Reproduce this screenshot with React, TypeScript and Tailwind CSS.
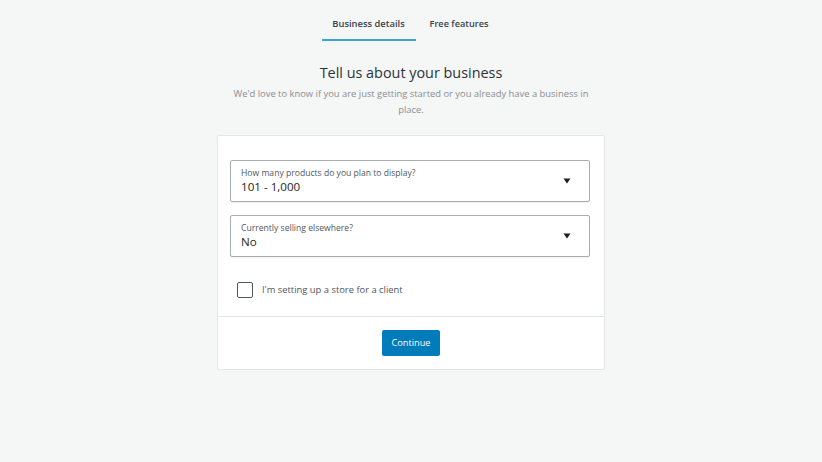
import React from "react";

function Caret() {
  return (
    <svg width="8" height="6" viewBox="0 0 8 6" className="shrink-0">
      <path d="M0.5 0.5 L7.5 0.5 L4 5.5 Z" fill="#1e1e1e" />
    </svg>
  );
}

function SelectBox({ label, value }: { label: string; value: string }) {
  return (
    <div className="flex h-[42px] w-[360px] items-center justify-between rounded-[2px] border border-[#a8adb1] bg-white pl-[10px] pr-[18px] shadow-[0_1px_1px_rgba(0,0,0,0.06)]">
      <div className="flex flex-col">
        <span className="text-[8.6px] leading-[11px] text-[#50575e]">{label}</span>
        <span className="text-[11.6px] leading-[15px] text-[#1e1e1e]">{value}</span>
      </div>
      <Caret />
    </div>
  );
}

export default function App() {
  return (
    <div
      className="flex min-h-[462px] w-full flex-col items-center bg-[#f5f6f6]"
      style={{ fontFamily: '"Open Sans", "Noto Sans", sans-serif' }}
    >
      <div className="mt-[15px] flex items-start gap-[14px] pr-[12px]">
        <div className="flex w-[94px] flex-col items-center">
          <span className="mt-px text-[9.4px] font-semibold leading-[16px] text-[#3c434a]">Business details</span>
          <div className="mt-[7px] h-[2px] w-full bg-[#3ea3d8]" />
        </div>
        <span className="mt-px text-[9.2px] font-semibold leading-[16px] text-[#3c434a]">Free features</span>
      </div>

      <h1 className="mt-[22px] text-[14.4px] leading-[20px] text-[#2c3338]">Tell us about your business</h1>
      <p className="mt-[3px] w-[366px] text-center text-[9.4px] leading-[16px] text-[#8a8f94]">
        We'd love to know if you are just getting started or you already have a business in place.
      </p>

      <div className="mt-[17px] flex w-[388px] flex-col rounded-[2px] border border-[#e4e6e8] bg-white">
        <div className="flex flex-col gap-[13px] px-[12px] pt-[24px]">
          <SelectBox label="How many products do you plan to display?" value="101 - 1,000" />
          <SelectBox label="Currently selling elsewhere?" value="No" />
        </div>
        <div className="flex items-center gap-[9px] pb-[18px] pl-[19px] pt-[25px]">
          <div className="h-[16px] w-[16px] rounded-[2px] border-[1.5px] border-[#50575e] bg-white" />
          <span className="text-[9.4px] text-[#50575e]">I'm setting up a store for a client</span>
        </div>
        <div className="h-px w-full bg-[#e4e6e8]" />
        <div className="flex justify-center pb-[13px] pt-[13px]">
          <button className="h-[26px] w-[58px] rounded-[2px] bg-[#007cba] text-[9.2px] text-white">Continue</button>
        </div>
      </div>
    </div>
  );
}
